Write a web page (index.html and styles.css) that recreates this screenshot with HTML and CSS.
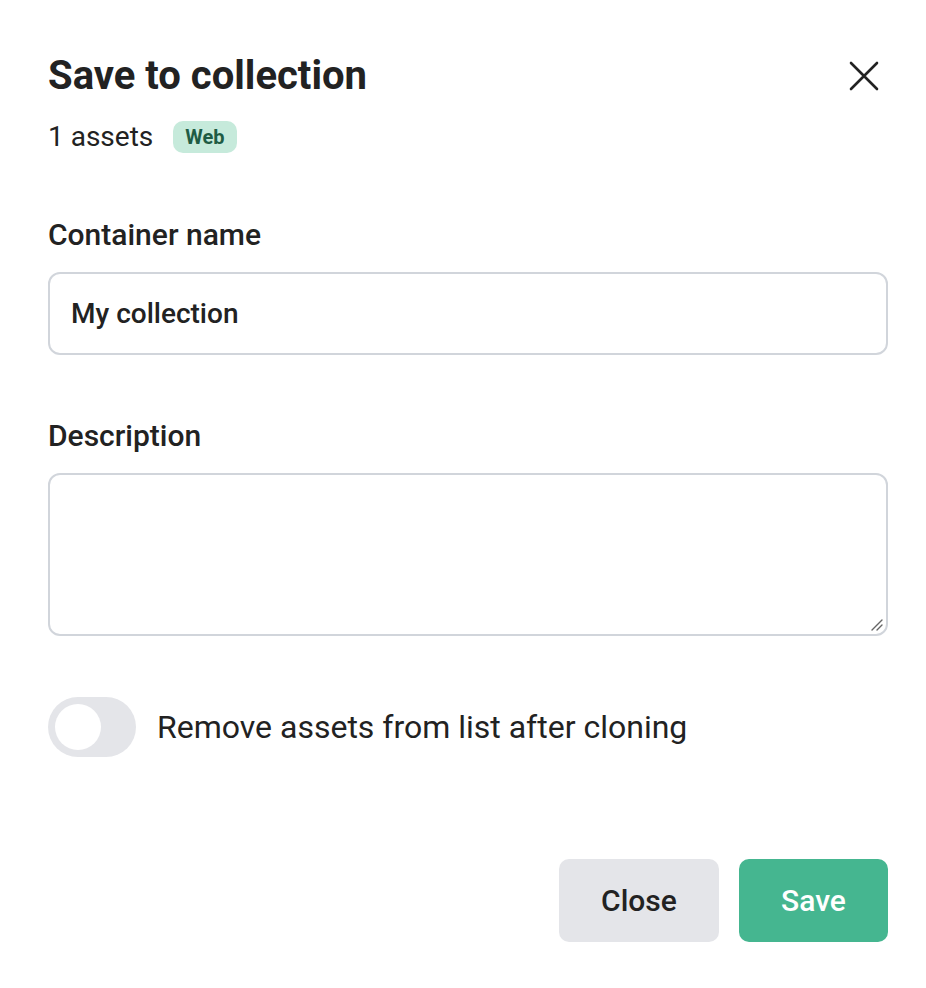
FILE: index.html
```html
<!DOCTYPE html>
<html>
<head>
<meta charset="utf-8">
<link rel="stylesheet" href="styles.css">
</head>
<body>
<div class="dialog">
  <div class="header">
    <h1 class="title">Save to collection</h1>
    <button class="close-x" aria-label="Close">
      <svg width="30" height="30" viewBox="0 0 30 30"><path d="M2 2 L28 28 M28 2 L2 28" stroke="#222" stroke-width="2.6" stroke-linecap="round" fill="none"/></svg>
    </button>
  </div>
  <div class="subtitle">
    <span class="count">1 assets</span>
    <span class="badge">Web</span>
  </div>
  <label class="label label-first">Container name</label>
  <div class="input">My collection</div>
  <label class="label label-next">Description</label>
  <div class="textarea">
    <svg class="grip" width="14" height="14" viewBox="0 0 14 14"><path d="M2 12 L12 2 M7 12 L12 7" stroke="#666" stroke-width="1.4" stroke-linecap="round"/></svg>
  </div>
  <div class="toggle-row">
    <span class="toggle"><span class="knob"></span></span>
    <span class="toggle-text">Remove assets from list after cloning</span>
  </div>
  <div class="actions">
    <button class="btn btn-close">Close</button>
    <button class="btn btn-save">Save</button>
  </div>
</div>
</body>
</html>
```
FILE: styles.css
```css
* { box-sizing: border-box; }
html, body { margin: 0; padding: 0; background: #fff; }
body { font-family: Roboto, "Liberation Sans", sans-serif; color: #222; }
.dialog { padding: 54px 38px 0 48px; width: 926px; }
.header { display: flex; justify-content: space-between; align-items: center; height: 44px; }
.title { margin: 0; font-size: 40px; line-height: 44px; font-weight: 700; color: #222; letter-spacing: 0; }
.close-x { border: 0; background: none; padding: 0; width: 30px; height: 30px; margin-right: 9px; display: flex; }
.subtitle { display: flex; align-items: center; gap: 20px; margin-top: 23px; height: 32px; }
.count { font-size: 28px; line-height: 32px; }
.badge { background: #c6eadb; color: #1f5c44; font-weight: 700; font-size: 20px; line-height: 32px; height: 32px; padding: 0 12px; border-radius: 10px; }
.label { display: block; font-size: 30px; line-height: 32px; font-weight: 500; }
.label-first { margin-top: 66px; }
.label-next { margin-top: 65px; }
.input { margin-top: 21px; height: 83px; border: 2px solid #d1d5db; border-radius: 12px; padding: 0 21px; display: flex; align-items: center; font-size: 28px; font-weight: 500; }
.textarea { margin-top: 21px; height: 163px; border: 2px solid #d1d5db; border-radius: 12px; position: relative; }
.grip { position: absolute; right: 2px; bottom: 2px; }
.toggle-row { display: flex; align-items: center; gap: 21px; margin-top: 61px; }
.toggle { width: 88px; height: 60px; border-radius: 30px; background: #e4e5e9; position: relative; display: block; flex: none; }
.knob { position: absolute; left: 7px; top: 7px; width: 46px; height: 46px; border-radius: 50%; background: #fff; }
.toggle-text { font-size: 32px; line-height: 36px; }
.actions { display: flex; justify-content: flex-end; gap: 20px; margin-top: 102px; }
.btn { border: 0; height: 83px; border-radius: 10px; font-family: Roboto, "Liberation Sans", sans-serif; font-size: 30px; font-weight: 500; }
.btn-close { width: 160px; background: #e4e5e9; color: #222; }
.btn-save { width: 149px; background: #45b690; color: #fff; }
```
